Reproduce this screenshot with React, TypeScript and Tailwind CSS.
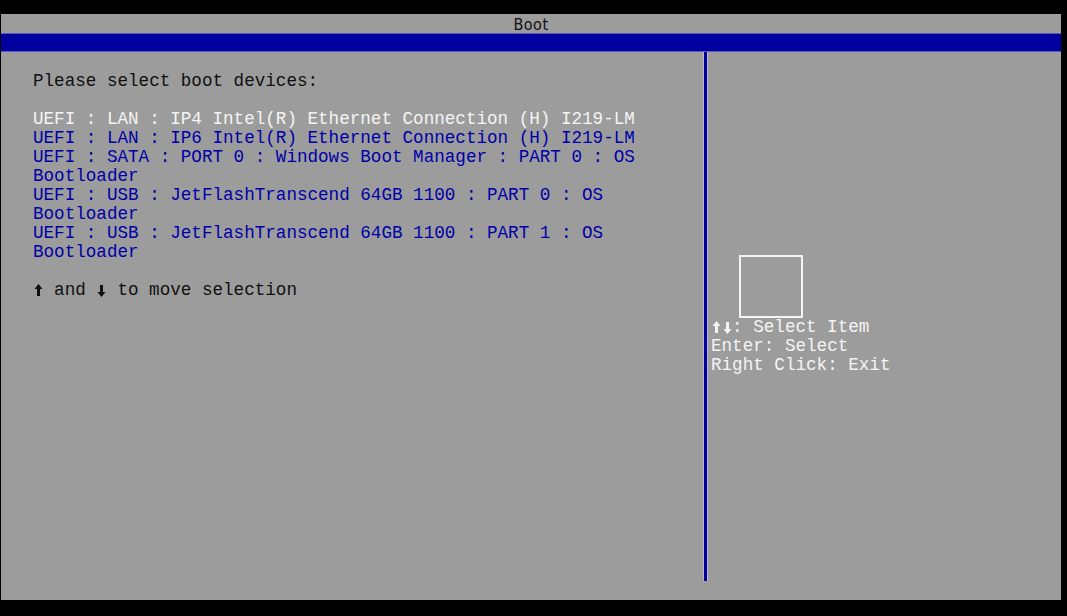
import React from "react";

type Entry = { text: string; selected?: boolean };

const entries: Entry[] = [
  { text: "UEFI : LAN : IP4 Intel(R) Ethernet Connection (H) I219-LM", selected: true },
  { text: "UEFI : LAN : IP6 Intel(R) Ethernet Connection (H) I219-LM" },
  { text: "UEFI : SATA : PORT 0 : Windows Boot Manager : PART 0 : OS\nBootloader" },
  { text: "UEFI : USB : JetFlashTranscend 64GB 1100 : PART 0 : OS\nBootloader" },
  { text: "UEFI : USB : JetFlashTranscend 64GB 1100 : PART 1 : OS\nBootloader" },
];

const mono = "font-['Liberation_Mono','DejaVu_Sans_Mono',monospace] text-[17.6px] leading-[19px] whitespace-pre";

// thick bitmap-style arrow, one character cell wide
function Arrow({ down }: { down?: boolean }) {
  return (
    <span className="inline-block w-[10.56px] h-[19px] align-top">
      <svg width="11" height="19" viewBox="0 0 11 19" className={down ? "rotate-180" : ""}>
        <path d="M5.5 3 L1.5 8 L4 8 L4 15 L7 15 L7 8 L9.5 8 Z" fill="currentColor" />
      </svg>
    </span>
  );
}

export default function App() {
  return (
    <div className="w-[1067px] h-[616px] bg-black pt-[14px] pl-[1px] overflow-hidden">
      <div className="w-[1060px] h-[586px] bg-[#9c9c9c] flex flex-col">
        {/* title */}
        <div className="h-[19px] pt-[2px] flex items-center justify-center text-[16px] text-[#111] font-['DejaVu_Sans_Condensed','DejaVu_Sans',sans-serif] tracking-[0.5px]">
          Boot
        </div>
        <div className="h-[19px] bg-[#0000a0] border-y border-[#5a5ab8]" />

        <div className="flex flex-1">
          {/* left list */}
          <div className={`w-[702px] pl-[32px] pt-[20px] ${mono}`}>
            <div className="text-[#101010]">Please select boot devices:</div>
            <div className="h-[19px]" />
            {entries.map((e) => (
              <div key={e.text} className={e.selected ? "text-[#f4f4f4]" : "text-[#0000a8]"}>
                {e.text}
              </div>
            ))}
            <div className="h-[19px]" />
            <div className="text-[#101010]">
              <Arrow /> and <Arrow down /> to move selection
            </div>
          </div>

          {/* divider */}
          <div className="h-[529px] w-[5px] flex">
            <div className="w-[1px] bg-[#b8b8c8]" />
            <div className="w-[3px] bg-[#0000a0]" />
            <div className="w-[1px] bg-[#b8b8c8]" />
          </div>

          {/* help panel */}
          <div className={`flex-1 pl-[3px] pt-[203px] ${mono}`}>
            <div className="ml-[28px] w-[64px] h-[63px] border-2 border-[#f4f4f4]" />
            <div className="text-[#f4f4f4]">
              <div>
                <Arrow />
                <Arrow down />: Select Item
              </div>
              <div>Enter: Select</div>
              <div>Right Click: Exit</div>
            </div>
          </div>
        </div>
      </div>
    </div>
  );
}
